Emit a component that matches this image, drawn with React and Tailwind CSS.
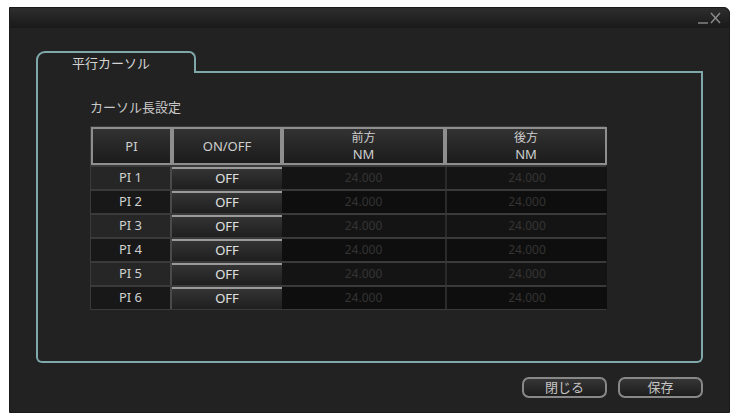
import React from 'react';

const rows = ['PI 1', 'PI 2', 'PI 3', 'PI 4', 'PI 5', 'PI 6'];

function HeaderCell({ children }) {
  return (
    <div className="flex flex-col items-center justify-center border-2 border-[#8e8e8e] bg-gradient-to-b from-[#323232] to-[#1c1c1c] text-[13px] leading-[16px] text-[#cfcfcf]">
      {children}
    </div>
  );
}

export default function App() {
  return (
    <div
      className="w-[737px] h-[418px] bg-white pl-[9px] pt-[7px]"
      style={{ fontFamily: '"Noto Sans", "Noto Sans CJK JP", sans-serif' }}
    >
      {/* Window */}
      <div className="w-[721px] h-[406px] bg-[#222222] rounded-tr-[6px] flex flex-col border border-[#1a1a1a]">
        {/* Title bar */}
        <div className="h-[20px] bg-gradient-to-b from-[#2e2e2e] to-[#191919] rounded-tr-[6px] flex justify-end items-center pr-[6px]">
          <svg width="26" height="14" viewBox="0 0 26 14" fill="none" stroke="#8c8c8c" strokeWidth="1.4">
            <path d="M1 12 H11" />
            <path d="M14 2 L23 12 M23 2 L14 12" />
          </svg>
        </div>

        {/* Body */}
        <div className="flex-1 flex flex-col px-[26px] pt-[23px]">
          {/* Tab row */}
          <div className="flex items-end h-[22px]">
            <div className="w-[160px] h-[22px] border-2 border-b-0 border-[#7fa8aa] rounded-tl-[9px] rounded-tr-[7px] pl-[34px] pt-[2px] text-[13px] leading-[16px] text-[#d4d4d4]">
              平行カーソル
            </div>
            <div className="flex-1 h-[2px] bg-[#7fa8aa]"></div>
          </div>

          {/* Panel */}
          <div className="h-[290px] border-2 border-t-0 border-[#7fa8aa] rounded-b-[6px] pl-[52px] pt-[26px]">
            <div className="text-[13px] leading-[16px] text-[#c8c8c8]">カーソル長設定</div>

            {/* Table */}
            <div className="mt-[11px] w-[516px] grid grid-cols-[81px_110px_163px_162px] grid-rows-[38px_repeat(6,22px)] gap-y-[2px] bg-[#3a3a3a] p-px">
              <HeaderCell>PI</HeaderCell>
              <HeaderCell>ON/OFF</HeaderCell>
              <HeaderCell>
                <span className="text-[12px]">前方</span>
                <span>NM</span>
              </HeaderCell>
              <HeaderCell>
                <span className="text-[12px]">後方</span>
                <span>NM</span>
              </HeaderCell>

              {rows.map((r, i) => (
                <React.Fragment key={r}>
                  <div
                    className={`flex items-center justify-center border-r-2 border-[#4a4a4a] text-[13px] text-[#d0d0d0] ${
                      i % 2 === 0 ? 'bg-[#262626]' : 'bg-[#181818]'
                    }`}
                  >
                    {r}
                  </div>
                  <div className="flex items-center justify-center border-t-2 border-[#9a9a9a] bg-gradient-to-b from-[#343434] to-[#1f1f1f] text-[13px] text-[#e2e2e2]">
                    OFF
                  </div>
                  <div
                    className={`flex items-center justify-center text-[12px] text-[#343434] ${
                      i % 2 === 0 ? 'bg-[#141414]' : 'bg-[#0e0e0e]'
                    }`}
                  >
                    24.000
                  </div>
                  <div
                    className={`flex items-center justify-center border-l-2 border-[#2a2a2a] text-[12px] text-[#343434] ${
                      i % 2 === 0 ? 'bg-[#141414]' : 'bg-[#0e0e0e]'
                    }`}
                  >
                    24.000
                  </div>
                </React.Fragment>
              ))}
            </div>
          </div>

          {/* Buttons */}
          <div className="mt-[14px] flex justify-end gap-[11px]">
            <button className="w-[85px] h-[21px] rounded-[7px] border-2 border-[#888888] bg-gradient-to-b from-[#363636] to-[#1d1d1d] text-[13px] leading-[15px] text-[#c4c4c4]">
              閉じる
            </button>
            <button className="w-[85px] h-[21px] rounded-[7px] border-2 border-[#888888] bg-gradient-to-b from-[#363636] to-[#1d1d1d] text-[13px] leading-[15px] text-[#c4c4c4]">
              保存
            </button>
          </div>
        </div>
      </div>
    </div>
  );
}
